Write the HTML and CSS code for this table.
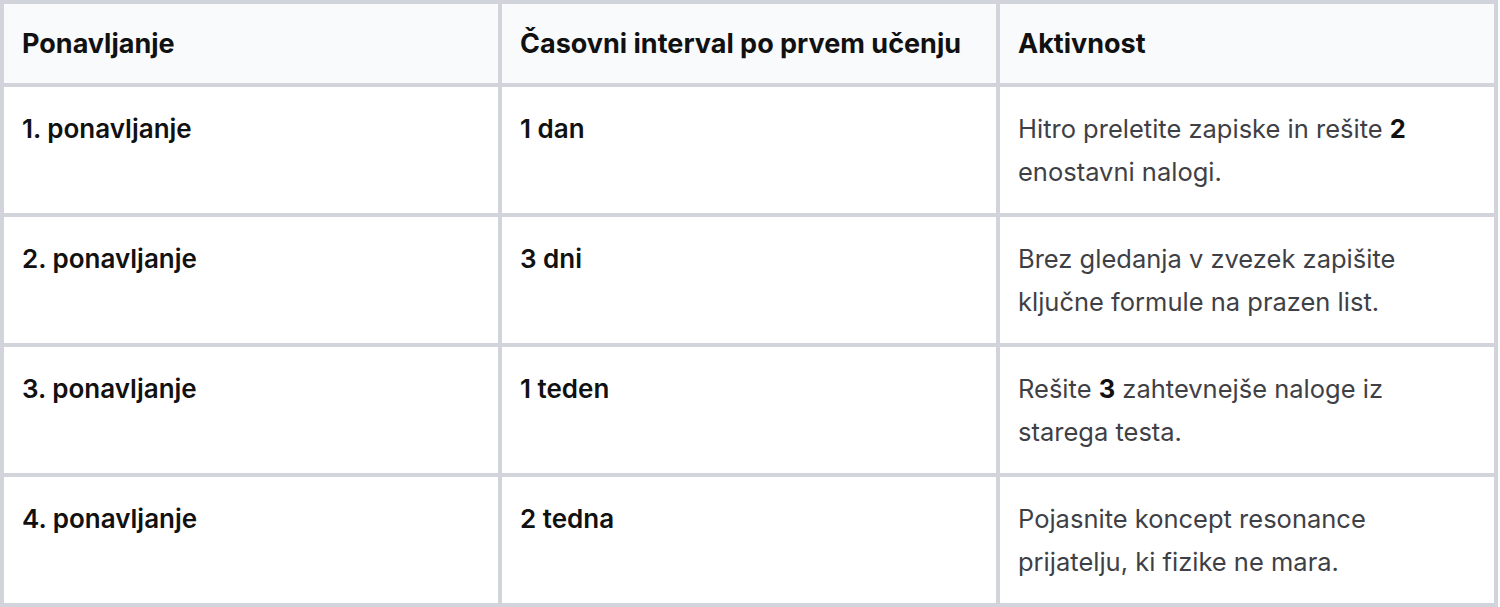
FILE: index.html
```html
<!DOCTYPE html>
<html lang="sl">
<head>
<meta charset="utf-8">
<link rel="stylesheet" href="styles.css">
</head>
<body>
<table class="plan">
  <thead>
    <tr>
      <th>Ponavljanje</th>
      <th>Časovni interval po prvem učenju</th>
      <th>Aktivnost</th>
    </tr>
  </thead>
  <tbody>
    <tr>
      <td class="strong">1. ponavljanje</td>
      <td class="strong">1 dan</td>
      <td class="act">Hitro preletite zapiske in rešite <b>2</b> enostavni nalogi.</td>
    </tr>
    <tr>
      <td class="strong">2. ponavljanje</td>
      <td class="strong">3 dni</td>
      <td class="act">Brez gledanja v zvezek zapišite ključne formule na prazen list.</td>
    </tr>
    <tr>
      <td class="strong">3. ponavljanje</td>
      <td class="strong">1 teden</td>
      <td class="act">Rešite <b>3</b> zahtevnejše naloge iz starega testa.</td>
    </tr>
    <tr>
      <td class="strong">4. ponavljanje</td>
      <td class="strong">2 tedna</td>
      <td class="act">Pojasnite koncept resonance prijatelju, ki fizike ne mara.</td>
    </tr>
  </tbody>
</table>
</body>
</html>
```
FILE: styles.css
```css
html, body {
  margin: 0;
  padding: 0;
  background: #ffffff;
}
body {
  font-family: Inter, "Noto Sans", "Liberation Sans", sans-serif;
  color: #111111;
}
.plan {
  width: 1498px;
  border-collapse: collapse;
  table-layout: fixed;
  border: 4px solid #d1d5db;
}
.plan th,
.plan td {
  border: 4px solid #d1d5db;
  text-align: left;
  vertical-align: top;
}
.plan th {
  background: #f9fafb;
  font-size: 27px;
  font-weight: 700;
  line-height: 32px;
  padding: 24px 18px 23px;
  color: #111111;
}
.plan td {
  font-size: 26px;
  line-height: 43px;
  padding: 20px 18px;
  height: 86px;
}
.plan td.strong {
  font-weight: 600;
  color: #111111;
}
.plan td.act {
  font-size: 25.5px;
  color: #3f3f46;
  font-weight: 400;
}
.plan td.act b {
  color: #111111;
  font-weight: 700;
}
```
